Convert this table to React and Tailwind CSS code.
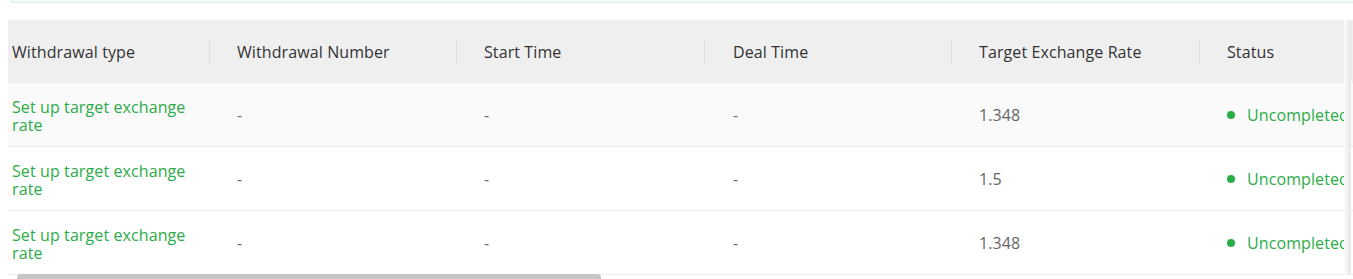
const rows = [
  { rate: "1.348", hover: true },
  { rate: "1.5" },
  { rate: "1.348" },
];

const cols = [
  "Withdrawal type",
  "Withdrawal Number",
  "Start Time",
  "Deal Time",
  "Target Exchange Rate",
  "Status",
];

const widths = ["w-[202px]", "w-[247px]", "w-[248px]", "w-[247px]", "w-[248px]", "w-[144px]"];
const pads = ["pl-[4px] pr-[16px]", "pl-[27px]", "pl-[27px]", "pl-[28px]", "pl-[27px]", "pl-[27px]"];

function Sep() {
  return <span className="absolute right-0 top-1/2 h-[24px] w-px -translate-y-1/2 bg-[#dcdcdc]" />;
}

export default function App() {
  return (
    <div
      className="h-[279px] w-[1353px] overflow-hidden bg-white pl-2"
      style={{ fontFamily: '"Open Sans", "Noto Sans", sans-serif' }}
    >
      <div className="ml-[2px] h-[3px] rounded-bl-md border-b border-l border-[#dff2e4] bg-[#f1faf4]" />
      <div className="relative mt-[17px] flex">
        <div className="flex-none">
          <div className="flex h-[63px] bg-[#efefef] text-[16px] tracking-[0.1px] text-[#333]">
            {cols.map((c, i) => (
              <div key={c} className={`relative flex flex-none items-center whitespace-nowrap ${widths[i]} ${pads[i]}`}>
                {c}
                {i < cols.length - 1 && <Sep />}
              </div>
            ))}
          </div>
          {rows.map((r, ri) => (
            <div
              key={ri}
              className={`flex h-[64px] border-b border-[#ececec] text-[16px] tracking-[0.1px] text-[#666] ${r.hover ? "bg-[#fafafa]" : "bg-white"}`}
            >
              <div className={`flex flex-none items-center pt-[2px] ${widths[0]} ${pads[0]} leading-[18px] text-[#2bac47]`}>
                Set up target exchange rate
              </div>
              <div className={`flex flex-none items-center ${widths[1]} ${pads[1]}`}>-</div>
              <div className={`flex flex-none items-center ${widths[2]} ${pads[2]}`}>-</div>
              <div className={`flex flex-none items-center ${widths[3]} ${pads[3]}`}>-</div>
              <div className={`flex flex-none items-center ${widths[4]} ${pads[4]}`}>{r.rate}</div>
              <div className={`flex flex-none items-center gap-[12px] overflow-hidden whitespace-nowrap ${widths[5]} ${pads[5]} text-[#2bac47]`}>
                <span className="h-[8px] w-[8px] flex-none rounded-full bg-[#2bac47]" />
                Uncompleted
              </div>
            </div>
          ))}
          <div className="pl-[9px]">
            <div className="-mt-[1px] h-[8px] w-[584px] rounded-full bg-[#c6c6c6]" />
          </div>
        </div>
        <div className="absolute left-[1335px] top-0 flex w-[30px] flex-col">
          <div className="flex">
            <div className="w-[8px] bg-gradient-to-r from-transparent to-black/10" />
            <div className="flex w-[22px] flex-col">
              <div className="h-[63px] bg-[#efefef]" />
              <div className="h-[64px] border-b border-[#ececec] bg-[#fafafa]" />
              <div className="h-[64px] border-b border-[#ececec] bg-white" />
              <div className="h-[64px] border-b border-[#ececec] bg-white" />
            </div>
          </div>
        </div>
      </div>
    </div>
  );
}
